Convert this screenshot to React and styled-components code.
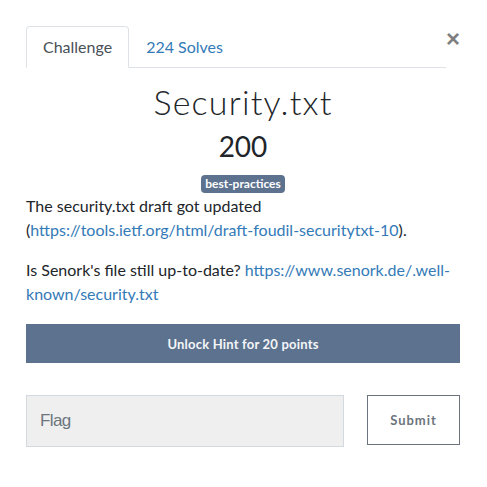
import React from "react";
import styled, { createGlobalStyle } from "styled-components";

const Global = createGlobalStyle`
  html, body { margin: 0; padding: 0; background: #fff; }
  body { font-family: Lato, "Noto Sans", sans-serif; color: #212529; }
  * { box-sizing: border-box; }
`;

const Modal = styled.div`
  width: 487px;
  padding: 26px 27px 0 26px;
`;

const Header = styled.div`
  display: flex;
  align-items: flex-start;
`;

const Tabs = styled.div`
  flex: 1;
  display: flex;
  border-bottom: 1px solid #dee2e6;
`;

const Tab = styled.div`
  padding: 8px 16px;
  font-size: 16px;
  line-height: 24px;
  margin-bottom: -1px;
  border: 1px solid ${(p) => (p.$active ? "#dee2e6" : "transparent")};
  border-bottom-color: ${(p) => (p.$active ? "#fff" : "transparent")};
  border-radius: 4px 4px 0 0;
  background: ${(p) => (p.$active ? "#fff" : "transparent")};
  color: ${(p) => (p.$active ? "#495057" : "#337ab7")};
`;

const Close = styled.div`
  width: 14px;
  margin-top: 1px;
  text-align: right;
  font-family: "Liberation Sans", Arial, sans-serif;
  font-size: 24px;
  font-weight: 700;
  line-height: 24px;
  color: #000;
  opacity: 0.5;
`;

const Title = styled.h2`
  margin: 14px 0 0;
  text-align: center;
  font-family: Lato, sans-serif;
  font-weight: 300;
  font-size: 34px;
  letter-spacing: 1.2px;
  line-height: 40px;
  color: #212529;
`;

const Points = styled.h3`
  margin: 7px 0 0;
  text-align: center;
  font-weight: 400;
  font-size: 28px;
  line-height: 34px;
  color: #212529;
`;

const Tags = styled.div`
  display: flex;
  justify-content: center;
  margin-top: 12px;
`;

const Badge = styled.span`
  background: #5c728f;
  color: #fff;
  font-size: 12px;
  font-weight: 700;
  line-height: 14px;
  padding: 2px 4px;
  border-radius: 4px;
`;

const Description = styled.div`
  margin-top: 1px;
  font-size: 16px;
  line-height: 24px;
  color: #212529;
  p { margin: 0 0 16px; }
  a { color: #337ab7; text-decoration: none; }
`;

const HintButton = styled.button`
  display: block;
  width: 100%;
  height: 39px;
  margin-top: 18px;
  border: none;
  background: #5c728f;
  color: #f4f6f8;
  font-family: Lato, sans-serif;
  font-weight: 700;
  font-size: 13px;
  letter-spacing: 0.2px;
`;

const SubmitRow = styled.div`
  display: flex;
  gap: 23px;
  margin-top: 32px;
  align-items: flex-start;
`;

const FlagInput = styled.input`
  flex: 1;
  height: 52px;
  min-width: 0;
  background: #efefef;
  border: 1px solid #d4d9df;
  padding: 0 13px;
  font-family: "Liberation Sans", Arial, sans-serif;
  font-size: 17px;
  letter-spacing: -0.6px;
  color: #495057;
  outline: none;
  &::placeholder { color: #6c757d; }
`;

const SubmitButton = styled.button`
  width: 93px;
  height: 50px;
  background: #fff;
  border: 1px solid #6c757d;
  color: #6c757d;
  font-family: Lato, sans-serif;
  font-weight: 700;
  font-size: 13px;
  letter-spacing: 1px;
`;

export default function App() {
  return (
    <>
      <Global />
      <Modal>
        <Header>
          <Tabs>
            <Tab $active>Challenge</Tab>
            <Tab>224 Solves</Tab>
          </Tabs>
          <Close>×</Close>
        </Header>
        <Title>Security.txt</Title>
        <Points>200</Points>
        <Tags>
          <Badge>best-practices</Badge>
        </Tags>
        <Description>
          <p>
            The security.txt draft got updated (
            <a href="#">https://tools.ietf.org/html/draft-foudil-securitytxt-10</a>).
          </p>
          <p>
            Is Senork's file still up-to-date?{" "}
            <a href="#">https://www.senork.de/.well-known/security.txt</a>
          </p>
        </Description>
        <HintButton>Unlock Hint for 20 points</HintButton>
        <SubmitRow>
          <FlagInput placeholder="Flag" />
          <SubmitButton>Submit</SubmitButton>
        </SubmitRow>
      </Modal>
    </>
  );
}
